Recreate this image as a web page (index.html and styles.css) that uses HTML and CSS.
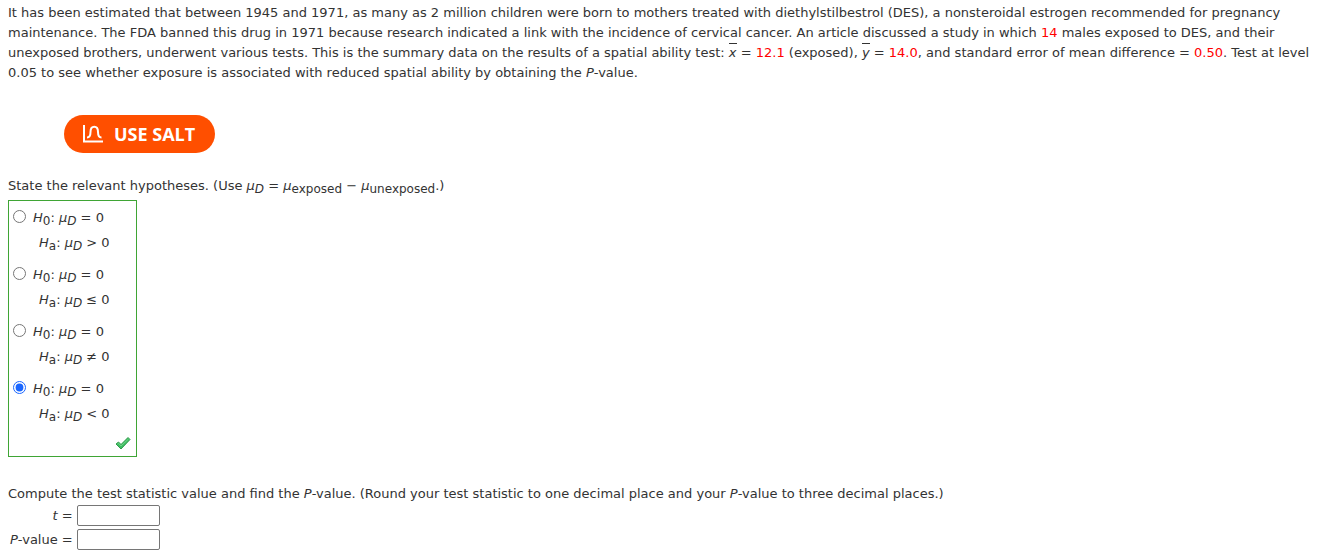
FILE: index.html
```html
<!DOCTYPE html>
<html lang="en">
<head>
<meta charset="utf-8">
<title>Spatial ability hypothesis test</title>
<link rel="stylesheet" href="styles.css">
</head>
<body>
<main class="question">
  <p class="prompt">It has been estimated that between 1945 and 1971, as many as 2 million children were born to mothers treated with diethylstilbestrol (DES), a nonsteroidal estrogen recommended for pregnancy<br>maintenance. The FDA banned this drug in 1971 because research indicated a link with the incidence of cervical cancer. An article discussed a study in which <span class="given">14</span> males exposed to DES, and their<br>unexposed brothers, underwent various tests. This is the summary data on the results of a spatial ability test: <i class="mean">x</i> = <span class="given">12.1</span> (exposed), <i class="mean">y</i> = <span class="given">14.0</span>, and standard error of mean difference = <span class="given">0.50</span>. Test at level<br>0.05 to see whether exposure is associated with reduced spatial ability by obtaining the <i>P</i>-value.</p>

  <button class="salt" type="button">
    <svg class="salt-icon" viewBox="0 0 20 19" aria-hidden="true"><path d="M1 0V16.500H20"/><path d="M4 12.500C7 12.500 7.500 10 7.500 7C7.500 0 15 0 15 7C15 10 15.500 12.500 18.500 12.500"/></svg>
    <span>USE SALT</span>
  </button>

  <p class="instruction">State the relevant hypotheses. (Use <i>μ<sub>D</sub></i> = <i>μ</i><sub>exposed</sub> − <i>μ</i><sub>unexposed</sub>.)</p>

  <div class="choices" role="radiogroup" aria-label="Hypotheses">
    <label class="choice"><input type="radio" name="hyp"><span class="pair"><span><i>H</i><sub>0</sub>: <i>μ<sub>D</sub></i> = 0</span><span class="alt"><i>H</i><sub>a</sub>: <i>μ<sub>D</sub></i> &gt; 0</span></span></label>
    <label class="choice"><input type="radio" name="hyp"><span class="pair"><span><i>H</i><sub>0</sub>: <i>μ<sub>D</sub></i> = 0</span><span class="alt"><i>H</i><sub>a</sub>: <i>μ<sub>D</sub></i> ≤ 0</span></span></label>
    <label class="choice"><input type="radio" name="hyp"><span class="pair"><span><i>H</i><sub>0</sub>: <i>μ<sub>D</sub></i> = 0</span><span class="alt"><i>H</i><sub>a</sub>: <i>μ<sub>D</sub></i> ≠ 0</span></span></label>
    <label class="choice"><input type="radio" name="hyp" checked><span class="pair"><span><i>H</i><sub>0</sub>: <i>μ<sub>D</sub></i> = 0</span><span class="alt"><i>H</i><sub>a</sub>: <i>μ<sub>D</sub></i> &lt; 0</span></span></label>
    <svg class="correct" viewBox="0 0 16 14" role="img" aria-label="Correct"><path class="correct-edge" d="M1 8L3.500 6L6 8.500L13 1.500L15 3.500L6 13Z"/><path class="correct-shine" d="M2.500 8L3.500 7.200L6 10L13.500 3"/></svg>
  </div>

  <p class="compute">Compute the test statistic value and find the <i>P</i>-value. (Round your test statistic to one decimal place and your <i>P</i>-value to three decimal places.)</p>

  <form class="answers">
    <label for="t"><i>t</i> =</label><input id="t" type="text">
    <label for="p"><i>P</i>-value =</label><input id="p" type="text">
  </form>
</main>
</body>
</html>
```
FILE: styles.css
```css
body {
  margin: 0;
  background: #fff;
  color: #333;
  font: 13px/20px Verdana, "DejaVu Sans", sans-serif;
}
.question {
  display: flex;
  flex-direction: column;
  align-items: flex-start;
  padding: 3px 8px 0;
}
p {
  margin: 0;
}
.given {
  color: #f00;
}
.mean {
  padding-top: 1px;
  border-top: 1px solid #333;
}
sub {
  font-size: 12px;
  line-height: 0;
  vertical-align: -3px;
}
.salt {
  display: flex;
  align-items: center;
  gap: 11px;
  height: 38px;
  margin: 32px 0 23px 56px;
  padding: 0 20px 0 19px;
  border: 0;
  border-radius: 19px;
  background: #ff4f00;
  color: #fff;
  font: bold 18px/24px "Open Sans", sans-serif;
}
.salt-icon {
  width: 20px;
  height: 19px;
  fill: none;
  stroke: #fff;
  stroke-width: 2;
}
.choices {
  display: flex;
  flex-direction: column;
  gap: 10px;
  box-sizing: border-box;
  margin: 4px 0 27px;
  padding: 7px 5px 6px 4px;
  min-width: 129px;
  border: 1px solid #3fa535;
}
.choice {
  display: flex;
  align-items: flex-start;
  gap: 7px;
}
.choice input {
  width: 13px;
  height: 13px;
  margin: 2px 0 0;
  accent-color: #1a66ff;
}
.pair {
  display: flex;
  flex-direction: column;
  line-height: 25px;
  margin-top: -3px;
}
.alt {
  padding-left: 6px;
}
.correct {
  width: 16px;
  height: 14px;
  align-self: flex-end;
}
.correct-edge {
  fill: #3cbd61;
  stroke: #319a4c;
  stroke-linejoin: round;
}
.correct-shine {
  fill: none;
  stroke: #6fd688;
}
.answers {
  display: grid;
  grid-template-columns: auto auto;
  align-items: center;
  gap: 3px 4px;
  margin: 1px 0 0 2px;
}
.answers label {
  text-align: right;
}
.answers input {
  box-sizing: border-box;
  width: 83px;
  height: 21px;
  border: 1px solid #767676;
  border-radius: 2px;
}
```
